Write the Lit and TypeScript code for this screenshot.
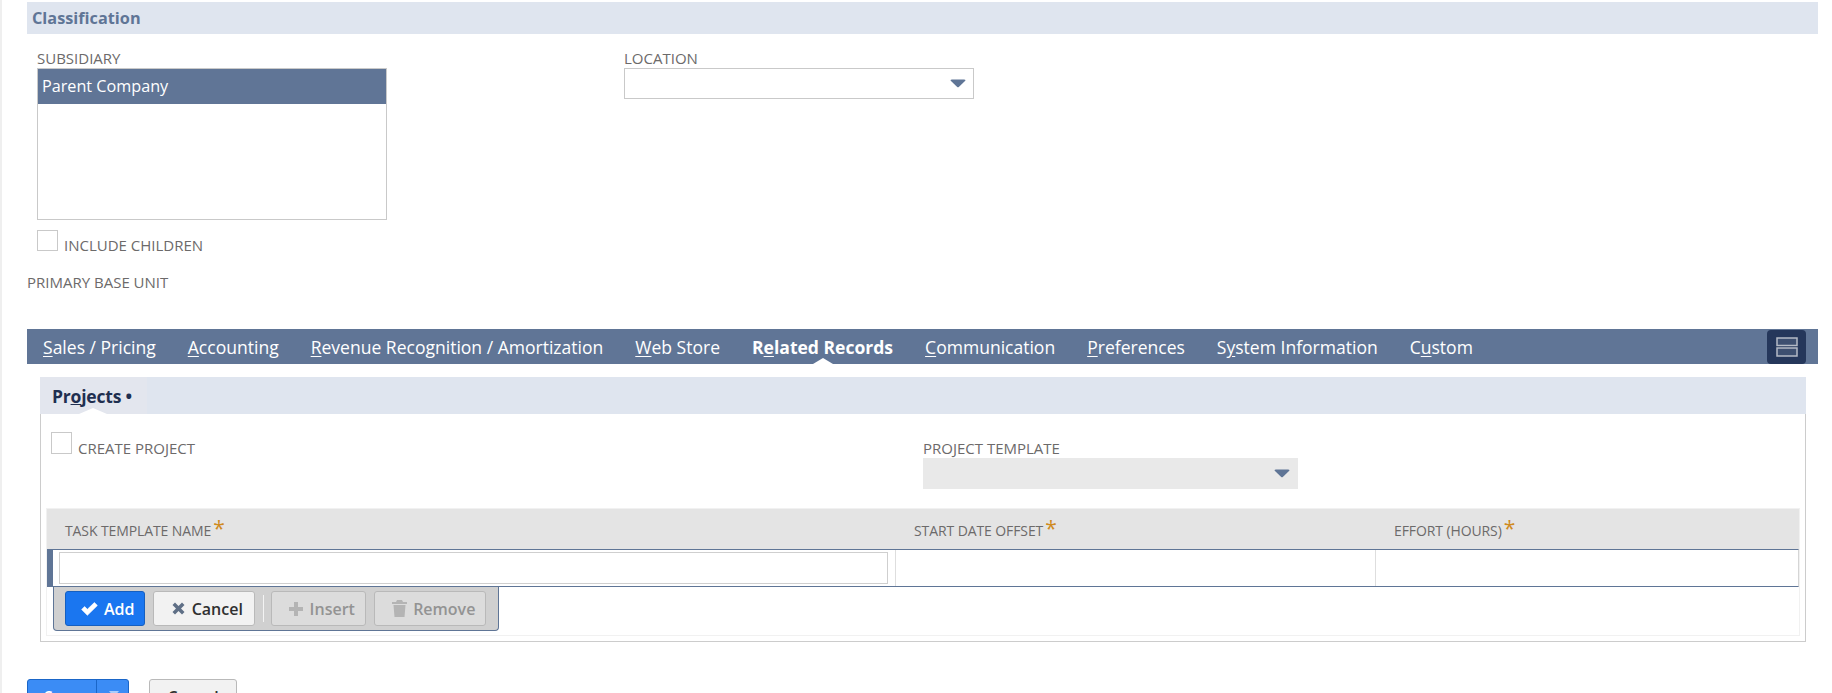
import { LitElement, html, css, svg } from "lit";
import { customElement } from "lit/decorators.js";

const tabs: [string, string, string, boolean?][] = [
  ["", "S", "ales / Pricing"],
  ["", "A", "ccounting"],
  ["", "R", "evenue Recognition / Amortization"],
  ["", "W", "eb Store"],
  ["R", "e", "lated Records", true],
  ["", "C", "ommunication"],
  ["", "P", "references"],
  ["S", "y", "stem Information"],
  ["C", "u", "stom"],
];

const caret = svg`<svg class="caret" width="16" height="9" viewBox="0 0 16 9"><path d="M0.5 1.5 Q0.5 0.5 2 0.5 H14 Q15.5 0.5 15.5 1.5 L8.8 8 Q8 8.6 7.2 8 Z" fill="#5f7596"/></svg>`;

@customElement("app-root")
export class AppRoot extends LitElement {
  static styles = css`
    :host {
      display: block;
      height: 693px;
      overflow: hidden;
      background: #fff;
      font-family: "Open Sans", "Noto Sans", sans-serif;
      font-size: 14px;
      color: #6b6b6b;
      box-sizing: border-box;
      border-left: 2px solid #efefef;
      padding: 2px 14px 0 25px;
    }
    * { box-sizing: border-box; }
    .section-title {
      height: 32px;
      background: #dfe5ef;
      padding-left: 5px;
      color: #5f7596;
      font-weight: 700;
      font-size: 16.3px;
      line-height: 33px;
    }
    .label {
      font-size: 15px;
      line-height: 16px;
      padding-bottom: 2px;
      color: #6c6a6a;
      white-space: nowrap;
    }
    .class-row {
      display: flex;
      padding: 16px 0 0 10px;
    }
    .col-a { width: 587px; }
    .listbox {
      width: 350px;
      height: 152px;
      border: 1px solid #c9c9c9;
    }
    .listbox div {
      height: 35px;
      background: #607596;
      color: #fff;
      font-size: 16.2px;
      line-height: 34px;
      padding-left: 4px;
    }
    .check-row {
      display: flex;
      align-items: flex-end;
      gap: 6px;
      margin-top: 10px;
    }
    .box {
      width: 21px;
      height: 21px;
      border: 1px solid #c9c9c9;
    }
    .check-row .label { margin-bottom: -4px; }
    .select {
      display: flex;
      align-items: center;
      justify-content: flex-end;
      width: 350px;
      height: 31px;
      border: 1px solid #c9c9c9;
      padding-right: 7px;
    }
    .select.off {
      width: 375px;
      border: none;
      background: #e9e9e9;
      padding-right: 8px;
    }
    .base-unit { margin-top: 23px; }
    .tabs {
      display: flex;
      align-items: center;
      position: relative;
      height: 35px;
      margin-top: 37px;
      background: #607596;
      padding-left: 16px;
      gap: 32px;
      color: #fff;
      font-size: 17.55px;
    }
    .tab { position: relative; padding-top: 2px; line-height: 33px; white-space: nowrap; }
    .tabs u { text-underline-offset: 2px; }
    .tab.on { font-weight: 700; }
    .tab.on::after {
      content: "";
      position: absolute;
      left: 50%;
      bottom: 0;
      margin-left: -10px;
      border: 10px solid transparent;
      border-top: none;
      border-bottom: 6px solid #fff;
    }
    .layout-btn {
      position: absolute;
      right: 12px;
      top: 1px;
      width: 39px;
      height: 34px;
      border-radius: 4px;
      background: #25375b;
      display: flex;
      align-items: center;
      justify-content: center;
    }
    .panel {
      margin: 13px 12px 0 13px;
      border: 1px solid #cccccc;
      border-top: none;
      height: 265px;
      display: flex;
      flex-direction: column;
    }
    .subtabs {
      height: 37px;
      margin: 0 -1px;
      background: #dfe5ef;
      flex: none;
    }
    .subtab {
      position: relative;
      display: inline-block;
      height: 37px;
      width: 107px;
      padding-left: 12px;
      color: #1f2f50;
      font-weight: 700;
      font-size: 17.5px;
      line-height: 39px;
      letter-spacing: -0.2px;
      background: #e3e6ee;
      white-space: nowrap;
    }
    .subtab::after {
      content: "";
      position: absolute;
      left: 39px;
      bottom: 0;
      border: 14px solid transparent;
      border-top: none;
      border-bottom: 6px solid #fff;
    }
    .fields {
      display: flex;
      height: 94px;
      flex: none;
      padding: 18px 0 0 10px;
    }
    .fields .create { width: 872px; }
    .create.check-row { margin: 0; align-self: flex-start; }
    .create .box { height: 22px; }
    .project { padding-top: 8px; }
    .grid { margin: 0 5px; border: 1px solid #f1f1f1; flex: none; height: 128px; }
    .thead {
      display: grid;
      grid-template-columns: 849px 480px 1fr;
      height: 40px;
      background: #e4e4e4;
    }
    .thead > div {
      padding-left: 18px;
      line-height: 44px;
      font-size: 14px;
      letter-spacing: -0.1px;
      color: #6c6a6a;
      white-space: nowrap;
    }
    .star {
      color: #cf8a1e;
      font-size: 21px;
      line-height: 16px;
      vertical-align: 0;
      margin-left: 2px;
    }
    .row {
      display: grid;
      grid-template-columns: 843px 480px 1fr;
      height: 38px;
      border-top: 1px solid #5f7596;
      border-bottom: 1px solid #5f7596;
      border-left: 6px solid #5f7596;
      border-right: 1px solid #d5d5d5;
    }
    .row > div { border-right: 1px solid #dedede; }
    .row > div:last-child { border: none; }
    .row .first { padding: 2px 7px 0 6px; }
    .row .input { height: 32px; border: 1px solid #cfcfcf; }
    .toolbar {
      display: inline-flex;
      align-items: flex-start;
      height: 44px;
      margin-left: 6px;
      padding: 4px 12px 0 11px;
      background: #d0d0d0;
      border: 1px solid #5f7596;
      border-top: none;
      border-radius: 0 0 4px 4px;
      gap: 8px;
      vertical-align: top;
    }
    .btn {
      display: inline-flex;
      align-items: center;
      justify-content: center;
      gap: 6.5px;
      height: 35px;
      padding-left: 7px;
      border-radius: 3px;
      font-size: 16px;
      font-weight: 600;
      border: 1px solid #b9b9b9;
      background: #f2f2f2;
      color: #303030;
      white-space: nowrap;
    }
    .btn.add { width: 80px; padding-left: 5px; background: #1a76f0; border-color: #155fc0; color: #fff; }
    .btn.cancel { width: 102px; }
    .btn.dis { background: #dcdcdc; color: #939393; border-color: #b9b9b9; }
    .btn.insert { width: 95px; }
    .btn.remove { width: 112px; }
    .sep { width: 1px; height: 27px; margin: 4px -1px 0 0; background: #f3f3f3; }
    .footer { display: flex; gap: 20px; margin-top: 37px; }
    .save {
      display: flex;
      width: 102px;
      height: 35px;
      border: 1px solid #1a66c8;
      border-radius: 3px;
      background: #3b8cf5;
      color: #fff;
      font-weight: 600;
      font-size: 16px;
    }
    .save span { width: 69px; border-right: 1px solid #1a66c8; text-align: center; line-height: 34px; }
    .save svg { margin: 11px 0 0 12px; }
    .cancel2 {
      width: 88px;
      height: 35px;
      border: 1px solid #b9b9b9;
      border-radius: 3px;
      background: #f2f2f2;
      color: #303030;
      font-weight: 600;
      font-size: 16px;
      text-align: center;
      line-height: 34px;
    }
  `;

  render() {
    return html`
      <div class="section-title">Classification</div>
      <div class="class-row">
        <div class="col-a">
          <div class="label">SUBSIDIARY</div>
          <div class="listbox"><div>Parent Company</div></div>
          <div class="check-row"><div class="box"></div><div class="label">INCLUDE CHILDREN</div></div>
        </div>
        <div>
          <div class="label">LOCATION</div>
          <div class="select">${caret}</div>
        </div>
      </div>
      <div class="label base-unit">PRIMARY BASE UNIT</div>
      <div class="tabs">
        ${tabs.map(
          ([a, u, b, on]) => html`<span class="tab ${on ? "on" : ""}">${a}<u>${u}</u>${b}</span>`
        )}
        <div class="layout-btn">
          <svg width="22" height="20" viewBox="0 0 22 20" fill="none" stroke="#b4bac6" stroke-width="1.5">
            <rect x="1" y="1" width="20" height="7.5" fill="#3d4f70" />
            <rect x="1" y="11" width="20" height="8" fill="#3d4f70" />
          </svg>
        </div>
      </div>
      <div class="panel">
        <div class="subtabs"><span class="subtab">Pr<u>o</u>jects •</span></div>
        <div class="fields">
          <div class="create check-row"><div class="box"></div><div class="label">CREATE PROJECT</div></div>
          <div class="project">
            <div class="label">PROJECT TEMPLATE</div>
            <div class="select off">${caret}</div>
          </div>
        </div>
        <div class="grid">
          <div class="thead">
            <div>TASK TEMPLATE NAME<span class="star">*</span></div>
            <div>START DATE OFFSET<span class="star">*</span></div>
            <div>EFFORT (HOURS)<span class="star">*</span></div>
          </div>
          <div class="row">
            <div class="first"><div class="input"></div></div>
            <div></div>
            <div></div>
          </div>
          <div class="toolbar">
            <div class="btn add">
              <svg width="17" height="14" viewBox="0 0 16 13"><path d="M0.6 7 L3.4 4.2 L6 6.8 L12.6 0.4 L15.4 3.2 L6 12.4 Z" fill="#fff" stroke="#fff" stroke-width="0.6" stroke-linejoin="round"/></svg>Add
            </div>
            <div class="btn cancel">
              <svg width="13" height="13" viewBox="0 0 13 13"><path d="M0.5 3 L3 0.5 L6.5 4 L10 0.5 L12.5 3 L9 6.5 L12.5 10 L10 12.5 L6.5 9 L3 12.5 L0.5 10 L4 6.5 Z" fill="#5f6f86"/></svg>Cancel
            </div>
            <div class="sep"></div>
            <div class="btn dis insert">
              <svg width="14" height="14" viewBox="0 0 14 14"><path d="M5 0 H9 V5 H14 V9 H9 V14 H5 V9 H0 V5 H5 Z" fill="#b4b4b4"/></svg>Insert
            </div>
            <div class="btn dis remove">
              <svg width="15" height="17" viewBox="0 0 15 17"><path d="M5 0 H10 L11 2 H15 V4 H0 V2 H4 Z M1.5 5 H13.5 L12.5 17 H2.5 Z" fill="#b4b4b4"/></svg>Remove
            </div>
          </div>
        </div>
      </div>
      <div class="footer">
        <div class="save"><span>Save</span>
          <svg width="10" height="6" viewBox="0 0 10 6"><path d="M0 0 H10 L5 6 Z" fill="#a9cdfb"/></svg>
        </div>
        <div class="cancel2">Cancel</div>
      </div>
    `;
  }
}
